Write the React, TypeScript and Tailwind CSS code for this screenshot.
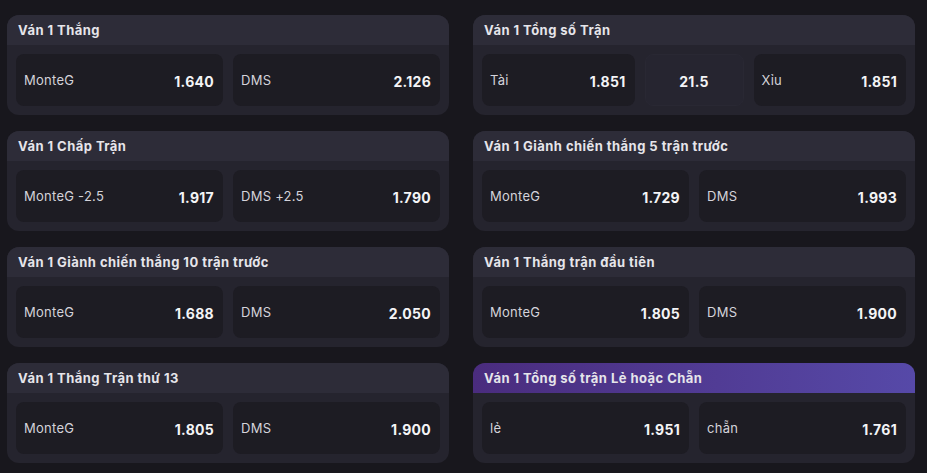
import React from "react";

type Pick = { label: string; odds: string };
type Market = { title: string; picks: Pick[]; line?: string; highlight?: boolean };

const left: Market[] = [
  { title: "Ván 1 Thắng", picks: [{ label: "MonteG", odds: "1.640" }, { label: "DMS", odds: "2.126" }] },
  { title: "Ván 1 Chấp Trận", picks: [{ label: "MonteG -2.5", odds: "1.917" }, { label: "DMS +2.5", odds: "1.790" }] },
  { title: "Ván 1 Giành chiến thắng 10 trận trước", picks: [{ label: "MonteG", odds: "1.688" }, { label: "DMS", odds: "2.050" }] },
  { title: "Ván 1 Thắng Trận thứ 13", picks: [{ label: "MonteG", odds: "1.805" }, { label: "DMS", odds: "1.900" }] },
];

const right: Market[] = [
  { title: "Ván 1 Tổng số Trận", picks: [{ label: "Tài", odds: "1.851" }, { label: "Xỉu", odds: "1.851" }], line: "21.5" },
  { title: "Ván 1 Giành chiến thắng 5 trận trước", picks: [{ label: "MonteG", odds: "1.729" }, { label: "DMS", odds: "1.993" }] },
  { title: "Ván 1 Thắng trận đầu tiên", picks: [{ label: "MonteG", odds: "1.805" }, { label: "DMS", odds: "1.900" }] },
  { title: "Ván 1 Tổng số trận Lẻ hoặc Chẵn", picks: [{ label: "lẻ", odds: "1.951" }, { label: "chẵn", odds: "1.761" }], highlight: true },
];

const PickCell = ({ pick }: { pick: Pick }) => (
  <div className="flex-1 h-[52px] rounded-lg bg-[#1d1c23] flex items-center justify-between pl-2 pr-[9px] pt-[2px]">
    <span className="text-[13px] tracking-[0.02em] text-[#d4d3da]">{pick.label}</span>
    <span className="text-[14px] font-bold tracking-[0.02em] text-[#f4f4f6]">{pick.odds}</span>
  </div>
);

const MarketCard = ({ m }: { m: Market }) => (
  <div className="rounded-xl overflow-hidden bg-[#25242e]">
    <div
      className={
        m.highlight
          ? "h-[30px] flex items-center px-[11px] pt-[2px] bg-gradient-to-r from-[#4a2c7e] to-[#5649a8]"
          : "h-[30px] flex items-center px-[11px] pt-[2px] bg-[#2d2c38]"
      }
    >
      <span className="text-[13px] font-bold tracking-[0.035em] text-[#e6e5ea]">{m.title}</span>
    </div>
    <div className="flex gap-[10px] p-[9px]">
      {m.line ? (
        <>
          <PickCell pick={m.picks[0]} />
          <div className="w-[99px] h-[52px] rounded-lg bg-[#262530] border border-[#292833] flex items-center justify-center pt-[2px]">
            <span className="text-[14px] font-bold tracking-[0.02em] text-[#f4f4f6]">{m.line}</span>
          </div>
          <PickCell pick={m.picks[1]} />
        </>
      ) : (
        m.picks.map((p) => <PickCell key={p.label} pick={p} />)
      )}
    </div>
  </div>
);

export default function App() {
  return (
    <div
      className="w-[927px] h-[473px] bg-[#18171d] pt-[15px] pl-[7px] pr-[12px] grid grid-cols-2 gap-x-6"
      style={{ fontFamily: "Inter, 'Noto Sans', sans-serif" }}
    >
      <div className="flex flex-col gap-4">
        {left.map((m) => (
          <MarketCard key={m.title} m={m} />
        ))}
      </div>
      <div className="flex flex-col gap-4">
        {right.map((m) => (
          <MarketCard key={m.title} m={m} />
        ))}
      </div>
    </div>
  );
}
